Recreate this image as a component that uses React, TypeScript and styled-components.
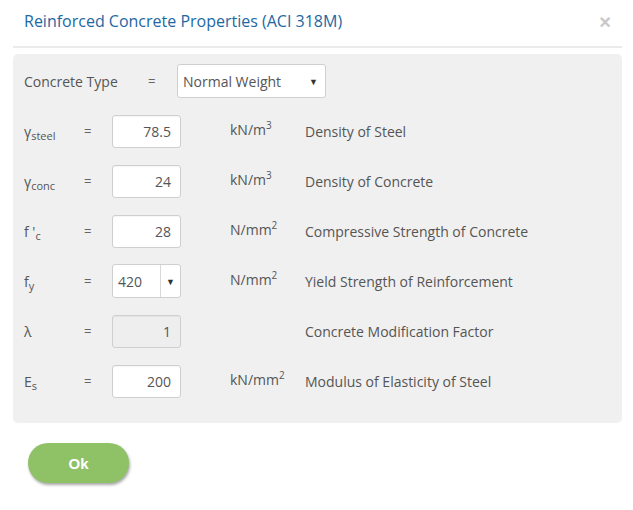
import React from "react";
import styled, { createGlobalStyle } from "styled-components";

const Global = createGlobalStyle`
  html, body { margin: 0; padding: 0; background: #fff; }
  body { font-family: "Open Sans", "Noto Sans", sans-serif; color: #555; }
  * { box-sizing: border-box; }
`;

const Dialog = styled.div`
  width: 633px;
  height: 510px;
  background: #fff;
`;

const Header = styled.div`
  height: 46px;
  display: flex;
  align-items: center;
  justify-content: space-between;
  padding: 0 22px 4px 24px;
`;

const Title = styled.h4`
  margin: 0;
  font-size: 16px;
  font-weight: 400;
  color: #1d68a3;
  letter-spacing: 0;
`;

const Close = styled.span`
  font-family: "Liberation Sans", Arial, sans-serif;
  font-size: 20px;
  font-weight: 700;
  color: #c8c8c8;
  line-height: 1;
  margin-top: 2px;
`;

const Divider = styled.div`
  margin: 0 11px 0 13px;
  border-top: 2px solid #ebebeb;
`;

const Panel = styled.div`
  margin: 6px 11px 0 13px;
  background: #f0f0f0;
  border-radius: 5px;
  padding: 10px 11px 25px 11px;
  display: flex;
  flex-direction: column;
  gap: 16px;
`;

const Row = styled.div<{ $wide?: boolean }>`
  display: grid;
  grid-template-columns: ${(p) => (p.$wide ? "124px 29px 149px" : "60px 28px 69px 124px 1fr")};
  align-items: center;
  min-height: 34px;
  font-size: 14px;
  color: #555;
`;

const Label = styled.span`
  white-space: nowrap;
  font-size: 14px;
`;

const Sub = styled.sub`
  font-size: 11px;
  vertical-align: -3px;
  line-height: 0;
`;

const Sup = styled.sup`
  font-size: 10px;
  vertical-align: 6px;
  line-height: 0;
`;

const Eq = styled.span`
  font-size: 13px;
  color: #666;
`;

const NumBox = styled.div<{ $disabled?: boolean }>`
  height: 33px;
  border: 1px solid #cfcfcf;
  border-radius: 3px;
  background: ${(p) => (p.$disabled ? "#eeeeee" : "#fff")};
  box-shadow: inset 0 1px 1px rgba(0, 0, 0, 0.04);
  display: flex;
  align-items: center;
  justify-content: flex-end;
  padding: 0 9px;
  font-size: 14px;
  color: #555;
`;

const SelectBox = styled.div`
  height: 34px;
  border: 1px solid #cfcfcf;
  border-radius: 3px;
  background: #fff;
  display: flex;
  align-items: center;
  justify-content: space-between;
  padding: 0 7px 0 5px;
  font-size: 14px;
  color: #555;
`;

const Caret = styled.span`
  font-size: 9px;
  color: #333;
`;

const SplitSelect = styled.div`
  height: 34px;
  border: 1px solid #cfcfcf;
  border-radius: 3px;
  background: #fff;
  display: grid;
  grid-template-columns: 1fr 20px;
  font-size: 14px;
  color: #555;
`;

const SplitValue = styled.span`
  display: flex;
  align-items: center;
  padding-left: 5px;
  padding-top: 1px;
`;

const SplitArrow = styled.span`
  border-left: 1px solid #d8d8d8;
  display: flex;
  align-items: center;
  justify-content: center;
  font-size: 9px;
  color: #333;
`;

const Unit = styled.span`
  white-space: nowrap;
  margin-top: -4px;
  padding-left: 49px;
`;

const Desc = styled.span`
  white-space: nowrap;
`;

const Footer = styled.div`
  padding: 20px 0 0 28px;
`;

const OkButton = styled.button`
  width: 101px;
  height: 40px;
  border: none;
  border-radius: 20px;
  background: #8fc266;
  color: #fff;
  font-family: "Liberation Sans", Arial, sans-serif;
  font-weight: 700;
  font-size: 15px;
  box-shadow: 1px 2px 3px rgba(0, 0, 0, 0.35);
  cursor: pointer;
`;

type Field = {
  label: React.ReactNode;
  value?: string;
  kind: "num" | "select" | "disabled";
  unit?: React.ReactNode;
  desc: string;
};

const fields: Field[] = [
  { label: <>γ<Sub>steel</Sub></>, value: "78.5", kind: "num", unit: <>kN/m<Sup>3</Sup></>, desc: "Density of Steel" },
  { label: <>γ<Sub>conc</Sub></>, value: "24", kind: "num", unit: <>kN/m<Sup>3</Sup></>, desc: "Density of Concrete" },
  { label: <>f '<Sub>c</Sub></>, value: "28", kind: "num", unit: <>N/mm<Sup>2</Sup></>, desc: "Compressive Strength of Concrete" },
  { label: <>f<Sub>y</Sub></>, value: "420", kind: "select", unit: <>N/mm<Sup>2</Sup></>, desc: "Yield Strength of Reinforcement" },
  { label: <>λ</>, value: "1", kind: "disabled", desc: "Concrete Modification Factor" },
  { label: <>E<Sub>s</Sub></>, value: "200", kind: "num", unit: <>kN/mm<Sup>2</Sup></>, desc: "Modulus of Elasticity of Steel" },
];

export default function App() {
  return (
    <Dialog>
      <Global />
      <Header>
        <Title>Reinforced Concrete Properties (ACI 318M)</Title>
        <Close>×</Close>
      </Header>
      <Divider />
      <Panel>
        <Row $wide>
          <Label>Concrete Type</Label>
          <Eq>=</Eq>
          <SelectBox>
            <span>Normal Weight</span>
            <Caret>▼</Caret>
          </SelectBox>
        </Row>
        {fields.map((f, i) => (
          <Row key={i}>
            <Label>{f.label}</Label>
            <Eq>=</Eq>
            {f.kind === "select" ? (
              <SplitSelect>
                <SplitValue>{f.value}</SplitValue>
                <SplitArrow>▼</SplitArrow>
              </SplitSelect>
            ) : (
              <NumBox $disabled={f.kind === "disabled"}>{f.value}</NumBox>
            )}
            <Unit>{f.unit}</Unit>
            <Desc>{f.desc}</Desc>
          </Row>
        ))}
      </Panel>
      <Footer>
        <OkButton>Ok</OkButton>
      </Footer>
    </Dialog>
  );
}
